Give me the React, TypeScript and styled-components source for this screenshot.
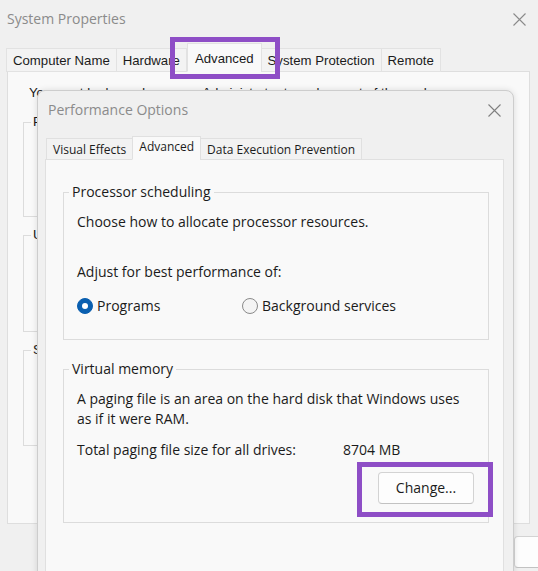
import React from "react";
import styled, { createGlobalStyle } from "styled-components";

const UI = `"Open Sans", "Noto Sans", sans-serif`;
const CLASSIC = `"Liberation Sans", Arial, sans-serif`;
const PURPLE = "#8e4ec6";

const GlobalStyle = createGlobalStyle`
  html, body { margin: 0; padding: 0; background: #f0f0f0; }
  body { width: 538px; height: 571px; overflow: hidden; }
  * { box-sizing: border-box; }
`;

const Desktop = styled.div`
  position: relative;
  width: 538px;
  height: 571px;
  overflow: hidden;
  background: #f0f0f0;
`;

/* ---------- shared ---------- */

const CloseIcon = ({ color = "#7c7c7c" }: { color?: string }) => (
  <svg width="13" height="13" viewBox="0 0 13 13">
    <path d="M0.5 0.5 L12.5 12.5 M12.5 0.5 L0.5 12.5" stroke={color} strokeWidth="1.1" fill="none" />
  </svg>
);

const TitleBar = styled.div<{ $h: number; $pl: number; $pr: number }>`
  display: flex;
  align-items: center;
  justify-content: space-between;
  height: ${(p) => p.$h}px;
  padding: 0 ${(p) => p.$pr}px 0 ${(p) => p.$pl}px;
  flex-shrink: 0;
`;

const TitleText = styled.span`
  font-family: ${UI};
  font-size: 14px;
  line-height: 20px;
  color: #8b8b8b;
`;

/* ---------- outer window ---------- */

const OuterWindow = styled.div`
  display: flex;
  flex-direction: column;
  width: 538px;
  height: 571px;
  background: #f0f0f0;
`;

const OuterTabStrip = styled.div`
  display: flex;
  align-items: flex-end;
  height: 33px;
  padding-left: 7px;
  flex-shrink: 0;
  position: relative;
  z-index: 1;
`;

const OuterTab = styled.div<{ $active?: boolean }>`
  font-family: ${CLASSIC};
  font-size: 13.2px;
  line-height: 20px;
  color: #1b1b1b;
  padding: ${(p) => (p.$active ? "5px 7px 0" : "2px 6px 0")};
  height: ${(p) => (p.$active ? 29 : 24)}px;
  margin-bottom: -1px;
  background: ${(p) => (p.$active ? "#f9f9f9" : "#f3f3f3")};
  border: 1px solid #e2e2e2;
  border-bottom: ${(p) => (p.$active ? "1px solid #f9f9f9" : "1px solid #e2e2e2")};
  margin-left: ${(p) => (p.$active ? 0 : -1)}px;
  white-space: nowrap;
`;

const OuterPanel = styled.div`
  height: 453px;
  margin: 0 8px 0 7px;
  padding: 11px 0 0 15px;
  background: #f9f9f9;
  border: 1px solid #dedede;
  flex-shrink: 0;
  display: flex;
  flex-direction: column;
`;

const OuterNote = styled.div`
  font-family: ${CLASSIC};
  font-size: 13.2px;
  line-height: 20px;
  color: #1b1b1b;
  margin-left: 6px;
  white-space: nowrap;
`;

const OuterGroup = styled.fieldset<{ $h: number; $mt: number }>`
  height: ${(p) => p.$h}px;
  margin: ${(p) => p.$mt}px 0 0 0;
  padding: 0 10px;
  border: 1px solid #dcdcdc;
  width: 480px;
`;

const OuterLegend = styled.legend`
  font-family: ${CLASSIC};
  font-size: 13.2px;
  line-height: 20px;
  color: #1b1b1b;
  padding: 0 2px;
  margin-left: -3px;
`;

const OuterButtons = styled.div`
  flex: 1;
  display: flex;
  justify-content: flex-end;
  gap: 8px;
  padding-top: 12px;
  margin-right: -64px;
`;

const WinButton = styled.button<{ $w: number }>`
  width: ${(p) => p.$w}px;
  height: 32px;
  font-family: ${UI};
  font-size: 14px;
  color: #1b1b1b;
  background: #fdfdfd;
  border: 1px solid #d3d3d3;
  border-bottom-color: #c2c2c2;
  border-radius: 4px;
  padding: 0;
  line-height: 20px;
`;

/* ---------- dialog ---------- */

const Dialog = styled.div`
  position: absolute;
  left: 37px;
  top: 90px;
  width: 477px;
  height: 500px;
  display: flex;
  flex-direction: column;
  background: #f0f0f0;
  border: 1px solid #cdcdcd;
  border-radius: 8px 8px 0 0;
  box-shadow: 0 0 6px rgba(0, 0, 0, 0.12);
  z-index: 2;
`;

const DialogTabStrip = styled.div`
  display: flex;
  align-items: flex-end;
  height: 30px;
  padding-left: 9px;
  flex-shrink: 0;
  position: relative;
  z-index: 1;
`;

const DialogTab = styled.div<{ $active?: boolean }>`
  font-family: ${UI};
  font-size: 12px;
  line-height: 18px;
  color: #1b1b1b;
  height: ${(p) => (p.$active ? 24 : 22)}px;
  padding: ${(p) => (p.$active ? "1px 6px 0" : "2px 6px 0")};
  margin-bottom: -1px;
  margin-left: -1px;
  background: ${(p) => (p.$active ? "#f9f9f9" : "#f2f2f2")};
  border: 1px solid #e0e0e0;
  border-bottom: ${(p) => (p.$active ? "1px solid #f9f9f9" : "1px solid #e0e0e0")};
  white-space: nowrap;
`;

const DialogPanel = styled.div`
  flex: 1;
  margin: 0 9px 0 7px;
  padding: 22px 14px 0 17px;
  background: #f9f9f9;
  border: 1px solid #e0e0e0;
  display: flex;
  flex-direction: column;
`;

const GroupBox = styled.fieldset<{ $mt: number; $pb: number }>`
  margin: ${(p) => p.$mt}px 0 0 0;
  padding: 0 14px ${(p) => p.$pb}px 13px;
  border: 1px solid #dcdcdc;
  min-width: 0;
`;

const GroupLegend = styled.legend`
  font-family: ${UI};
  font-size: 14px;
  line-height: 20px;
  color: #1b1b1b;
  padding: 0 3px;
  margin-left: -8px;
`;

const Line = styled.div<{ $mt?: number }>`
  font-family: ${UI};
  font-size: 14px;
  line-height: 20px;
  color: #1b1b1b;
  margin-top: ${(p) => p.$mt ?? 0}px;
  white-space: nowrap;
`;

const RadioRow = styled.div`
  display: grid;
  grid-template-columns: 165px auto;
  margin-top: 14px;
`;

const RadioItem = styled.label`
  display: flex;
  align-items: center;
  gap: 4px;
  font-family: ${UI};
  font-size: 14px;
  line-height: 20px;
  color: #1b1b1b;
`;

const RadioCircle = styled.span<{ $checked?: boolean }>`
  width: 16px;
  height: 16px;
  border-radius: 50%;
  flex-shrink: 0;
  display: flex;
  align-items: center;
  justify-content: center;
  background: ${(p) => (p.$checked ? "#0a5fb0" : "#f4f4f4")};
  border: 1px solid ${(p) => (p.$checked ? "#0a5fb0" : "#8a8a8a")};
  &::after {
    content: "";
    display: ${(p) => (p.$checked ? "block" : "none")};
    width: 6px;
    height: 6px;
    border-radius: 50%;
    background: #ffffff;
  }
`;

const TotalRow = styled.div`
  display: grid;
  grid-template-columns: 266px auto;
  margin-top: 11px;
  font-family: ${UI};
  font-size: 14px;
  line-height: 20px;
  color: #1b1b1b;
  white-space: nowrap;
`;

const ButtonRow = styled.div`
  display: flex;
  justify-content: flex-end;
  margin-top: 12px;
`;

/* ---------- annotation ---------- */

const Highlight = styled.div`
  position: absolute;
  border: 5px solid ${PURPLE};
  z-index: 5;
  pointer-events: none;
`;

export default function App() {
  return (
    <>
      <GlobalStyle />
      <Desktop>
        <OuterWindow>
          <TitleBar $h={38} $pl={7} $pr={12}>
            <TitleText>System Properties</TitleText>
            <CloseIcon color="#8a8a8a" />
          </TitleBar>
          <OuterTabStrip>
            <OuterTab>Computer Name</OuterTab>
            <OuterTab>Hardware</OuterTab>
            <OuterTab $active>Advanced</OuterTab>
            <OuterTab>System Protection</OuterTab>
            <OuterTab>Remote</OuterTab>
          </OuterTabStrip>
          <OuterPanel>
            <OuterNote>You must be logged on as an Administrator to make most of these changes.</OuterNote>
            <OuterGroup $h={105} $mt={9}>
              <OuterLegend>Performance</OuterLegend>
            </OuterGroup>
            <OuterGroup $h={107} $mt={8}>
              <OuterLegend>User Profiles</OuterLegend>
            </OuterGroup>
            <OuterGroup $h={106} $mt={8}>
              <OuterLegend>Startup and Recovery</OuterLegend>
            </OuterGroup>
          </OuterPanel>
          <OuterButtons>
            <WinButton $w={88}>OK</WinButton>
            <WinButton $w={88}>Cancel</WinButton>
            <WinButton $w={88}>Apply</WinButton>
          </OuterButtons>
        </OuterWindow>

        <Dialog>
          <TitleBar $h={38} $pl={10} $pr={12}>
            <TitleText>Performance Options</TitleText>
            <CloseIcon color="#7f7f7f" />
          </TitleBar>
          <DialogTabStrip>
            <DialogTab>Visual Effects</DialogTab>
            <DialogTab $active>Advanced</DialogTab>
            <DialogTab>Data Execution Prevention</DialogTab>
          </DialogTabStrip>
          <DialogPanel>
            <GroupBox $mt={0} $pb={23}>
              <GroupLegend>Processor scheduling</GroupLegend>
              <Line $mt={10}>Choose how to allocate processor resources.</Line>
              <Line $mt={30}>Adjust for best performance of:</Line>
              <RadioRow>
                <RadioItem>
                  <RadioCircle $checked />
                  Programs
                </RadioItem>
                <RadioItem>
                  <RadioCircle />
                  Background services
                </RadioItem>
              </RadioRow>
            </GroupBox>
            <GroupBox $mt={19} $pb={18}>
              <GroupLegend>Virtual memory</GroupLegend>
              <Line $mt={10}>A paging file is an area on the hard disk that Windows uses</Line>
              <Line>as if it were RAM.</Line>
              <TotalRow>
                <span>Total paging file size for all drives:</span>
                <span>8704 MB</span>
              </TotalRow>
              <ButtonRow>
                <WinButton $w={96}>Change...</WinButton>
              </ButtonRow>
            </GroupBox>
          </DialogPanel>
        </Dialog>

        <Highlight style={{ left: 170, top: 37, width: 110, height: 42 }} />
        <Highlight style={{ left: 357, top: 462, width: 136, height: 55 }} />
      </Desktop>
    </>
  );
}
